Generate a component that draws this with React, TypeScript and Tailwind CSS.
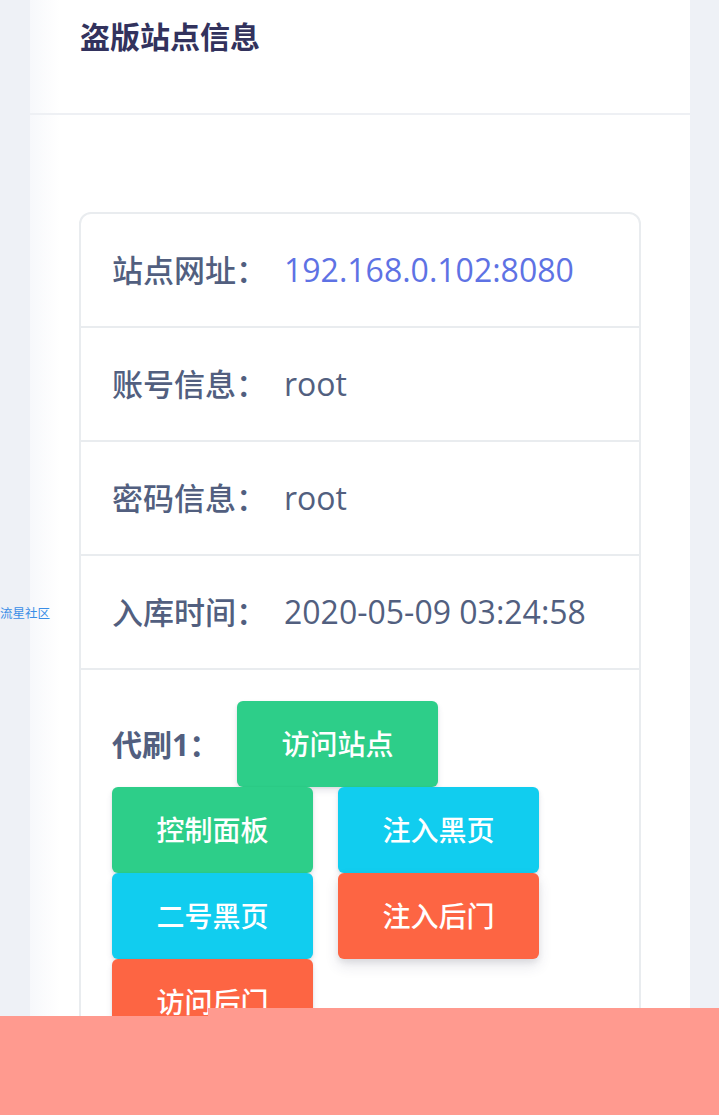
const FONT = "font-['Open_Sans','Noto_Sans_CJK_SC',sans-serif]";

type Row = { label: string; value: string; link?: boolean };

const ROWS: Row[] = [
  { label: "站点网址：", value: "192.168.0.102:8080", link: true },
  { label: "账号信息：", value: "root" },
  { label: "密码信息：", value: "root" },
  { label: "入库时间：", value: "2020-05-09 03:24:58" },
];

const SHADOW = "shadow-[0_4px_6px_rgba(50,50,93,0.11),0_1px_3px_rgba(0,0,0,0.08)]";

function Btn({ text, color, extra = "" }: { text: string; color: string; extra?: string }) {
  return (
    <button
      className={`w-[201px] h-[86px] rounded-[6px] text-white text-[28px] font-medium ${color} ${extra}`}
    >
      {text}
    </button>
  );
}

export default function App() {
  return (
    <div className={`relative h-[1115px] overflow-hidden bg-[#eef1f6] ${FONT}`}>
      {/* side link */}
      <div className="absolute left-0 top-[605px] text-[12.5px] text-[#3a8ee6] leading-[18px]">流星社区</div>

      <div className="ml-[30px] w-[660px] h-full bg-[linear-gradient(to_right,#f7f8fb,#ffffff_30px)]">
        <div className="h-[115px] border-b-2 border-[#eef0f4] pl-[50px] pt-[16px]">
          <h3 className="text-[30px] font-semibold text-[#32325d] leading-[42px]">盗版站点信息</h3>
        </div>

        <div className="pt-[97px] pl-[49px] pr-[49px]">
          <div className="border-2 border-[#e9ecef] rounded-t-[12px]">
            {ROWS.map((r) => (
              <div
                key={r.label}
                className="h-[114px] border-b-2 border-[#e9ecef] flex items-center pl-[31px]"
              >
                <span className="text-[31px] font-medium text-[#525f7f] w-[172px]">{r.label}</span>
                <span className={`text-[32px] ${r.link ? "text-[#5e72e4]" : "text-[#525f7f]"}`}>
                  {r.value}
                </span>
              </div>
            ))}

            <div className="pl-[31px] pt-[31px] pb-[200px]">
              <div className="flex items-center">
                <span className="text-[30px] font-bold text-[#525f7f] w-[125px]">代刷1：</span>
                <Btn text="访问站点" color="bg-[#2dce89]" extra={SHADOW} />
              </div>
              <div className="flex gap-[25px]">
                <div className="flex flex-col">
                  <Btn text="控制面板" color="bg-[#2dce89]" extra={SHADOW} />
                  <Btn text="二号黑页" color="bg-[#11cdef]" extra={SHADOW} />
                  <Btn text="访问后门" color="bg-[#fd6543]" extra={SHADOW} />
                </div>
                <div className="flex flex-col">
                  <Btn text="注入黑页" color="bg-[#11cdef]" extra={`${SHADOW} h-[84px]`} />
                  <Btn
                    text="注入后门"
                    color="bg-[#fd6543]"
                    extra="shadow-[0_7px_14px_rgba(50,50,93,0.12),0_3px_6px_rgba(0,0,0,0.08)]"
                  />
                </div>
              </div>
            </div>
          </div>
        </div>
      </div>

      {/* bottom overlay */}
      <div className="absolute left-[208px] right-0 top-[1008px] h-[8px] bg-[#ff9a8f]" />
      <div className="absolute left-0 right-0 top-[1016px] bottom-0 bg-[#ff9a8f]" />
    </div>
  );
}
